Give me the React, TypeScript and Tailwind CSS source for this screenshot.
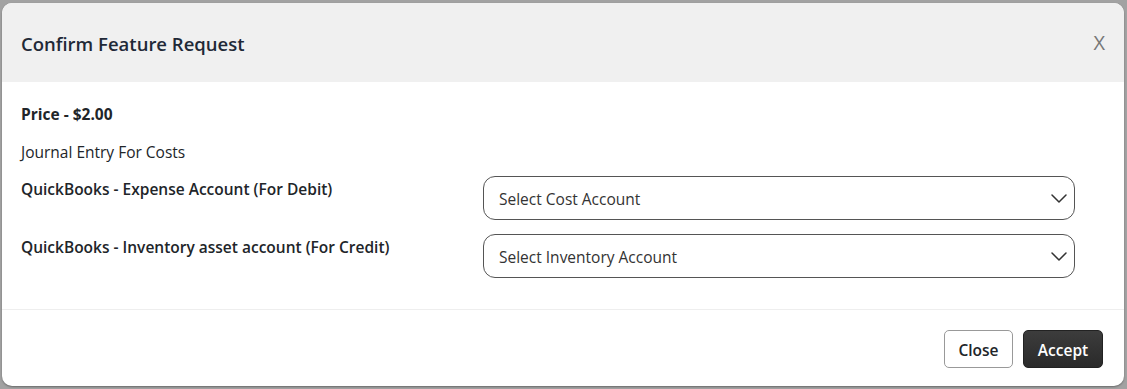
const font = { fontFamily: '"Open Sans", "Noto Sans", sans-serif' };

function AccountSelect({ placeholder }: { placeholder: string }) {
  return (
    <div className="flex h-[44px] w-[592px] items-center justify-between rounded-[12px] border border-[#555] bg-white pl-[15px] pr-[7px] text-[15.5px] text-[#333]">
      <span className="pt-[4px]">{placeholder}</span>
      <svg width="16" height="9" viewBox="0 0 16 9" fill="none" stroke="#333" strokeWidth="1.5" strokeLinecap="round" strokeLinejoin="round">
        <path d="M1 1l7 7 7-7" />
      </svg>
    </div>
  );
}

export default function App() {
  return (
    <div
      className="h-[389px] w-[1127px] overflow-hidden bg-[#a2a2a2] pl-[2px] pt-[3px]"
      style={font}
    >
      <div className="flex h-[383px] w-[1122px] flex-col overflow-hidden rounded-[10px] bg-white shadow-[0_1px_2px_rgba(0,0,0,0.35)]">
        {/* header */}
        <div className="flex h-[79px] shrink-0 items-center justify-between bg-[#f0f0f0] pl-[19px] pr-[19px]">
          <h2 className="mt-[2px] text-[18.5px] font-semibold text-[#1f2937]">Confirm Feature Request</h2>
          <button type="button" className="text-[20px] text-[#777]">
            X
          </button>
        </div>

        {/* body */}
        <div className="flex-1 border-b border-[#eeeeee] px-[19px] pt-[21px]">
          <p className="text-[15.5px] font-bold leading-[22px] text-[#212529]">Price - $2.00</p>
          <p className="mt-[16px] text-[15.5px] leading-[22px] text-[#212529]">Journal Entry For Costs</p>
          <div className="mt-[13px] flex flex-col gap-[14px]">
            <div className="flex">
              <label className="mt-[2px] w-[462px] text-[15.5px] font-semibold leading-[22px] text-[#212529]">
                QuickBooks - Expense Account (For Debit)
              </label>
              <AccountSelect placeholder="Select Cost Account" />
            </div>
            <div className="flex">
              <label className="mt-[2px] w-[462px] text-[15.5px] font-semibold leading-[22px] text-[#212529]">
                QuickBooks - Inventory asset account (For Credit)
              </label>
              <AccountSelect placeholder="Select Inventory Account" />
            </div>
          </div>
        </div>

        {/* footer */}
        <div className="flex h-[76px] shrink-0 items-start justify-end gap-[10px] pr-[21px] pt-[20px]">
          <button
            type="button"
            className="h-[38px] w-[69px] rounded-[5px] border border-[#999] bg-white pt-[3px] text-[15.5px] font-semibold text-[#212529]"
          >
            Close
          </button>
          <button
            type="button"
            className="h-[38px] w-[80px] rounded-[5px] border border-[#222] bg-gradient-to-b from-[#3c3c3c] to-[#2a2a2a] pt-[3px] text-[15.5px] font-semibold text-white"
          >
            Accept
          </button>
        </div>
      </div>
    </div>
  );
}
